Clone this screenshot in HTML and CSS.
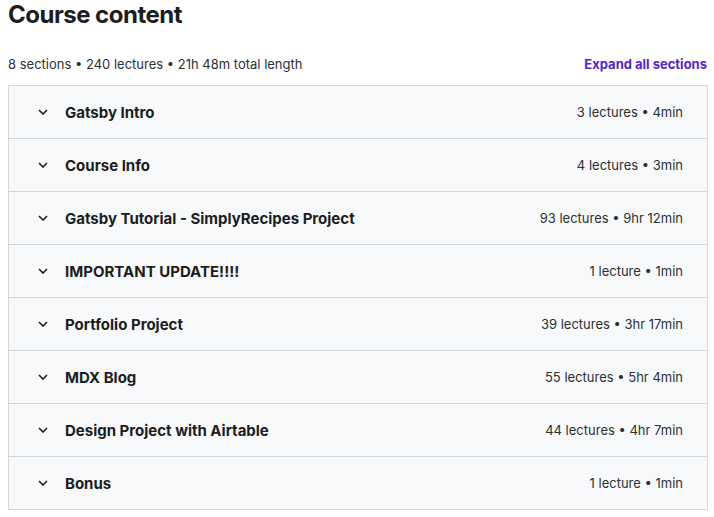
FILE: index.html
```html
<!DOCTYPE html>
<html>
<head>
<meta charset="utf-8">
<link rel="stylesheet" href="styles.css">
</head>
<body>
<div class="page">
  <h2 class="title">Course content</h2>
  <div class="meta">
    <span class="summary">8 sections • 240 lectures • 21h 48m total length</span>
    <button class="expand">Expand all sections</button>
  </div>
  <div class="sections">
    <div class="row"><svg class="chev" viewBox="0 0 10 6"><path d="M1 1l4 4 4-4"/></svg><span class="name">Gatsby Intro</span><span class="info">3 lectures • 4min</span></div>
    <div class="row"><svg class="chev" viewBox="0 0 10 6"><path d="M1 1l4 4 4-4"/></svg><span class="name">Course Info</span><span class="info">4 lectures • 3min</span></div>
    <div class="row"><svg class="chev" viewBox="0 0 10 6"><path d="M1 1l4 4 4-4"/></svg><span class="name">Gatsby Tutorial - SimplyRecipes Project</span><span class="info">93 lectures • 9hr 12min</span></div>
    <div class="row"><svg class="chev" viewBox="0 0 10 6"><path d="M1 1l4 4 4-4"/></svg><span class="name">IMPORTANT UPDATE!!!!</span><span class="info">1 lecture • 1min</span></div>
    <div class="row"><svg class="chev" viewBox="0 0 10 6"><path d="M1 1l4 4 4-4"/></svg><span class="name">Portfolio Project</span><span class="info">39 lectures • 3hr 17min</span></div>
    <div class="row"><svg class="chev" viewBox="0 0 10 6"><path d="M1 1l4 4 4-4"/></svg><span class="name">MDX Blog</span><span class="info">55 lectures • 5hr 4min</span></div>
    <div class="row"><svg class="chev" viewBox="0 0 10 6"><path d="M1 1l4 4 4-4"/></svg><span class="name">Design Project with Airtable</span><span class="info">44 lectures • 4hr 7min</span></div>
    <div class="row"><svg class="chev" viewBox="0 0 10 6"><path d="M1 1l4 4 4-4"/></svg><span class="name">Bonus</span><span class="info">1 lecture • 1min</span></div>
  </div>
</div>
</body>
</html>
```

FILE: styles.css
```css
* { box-sizing: border-box; }
body {
  margin: 0;
  background: #fff;
  font-family: Inter, "Noto Sans", sans-serif;
  color: #1c1d1f;
}
.page {
  padding: 0 6px 0 8px;
}
.title {
  margin: 0;
  padding-top: 1px;
  font-size: 24px;
  line-height: 28px;
  font-weight: 700;
  letter-spacing: -0.5px;
}
.meta {
  display: flex;
  justify-content: space-between;
  align-items: center;
  margin-top: 21px;
  height: 28px;
  margin-bottom: 7px;
}
.summary {
  font-size: 13px;
  color: #2d2f31;
}
.expand {
  border: 0;
  background: none;
  padding: 0;
  margin-right: 1px;
  font-family: inherit;
  font-size: 13px;
  font-weight: 700;
  color: #5624d0;
}
.sections {
  border: 1px solid #d1d7dc;
  border-bottom: 0;
}
.row {
  display: flex;
  align-items: center;
  height: 53px;
  background: #f7f9fa;
  border-bottom: 1px solid #d1d7dc;
  padding: 0 24px 0 29px;
}
.chev {
  width: 10px;
  height: 6px;
  fill: none;
  stroke: #1c1d1f;
  stroke-width: 1.6;
  margin-right: 17px;
}
.name {
  flex: 1;
  font-size: 15px;
  font-weight: 700;
}
.info {
  font-size: 13px;
  color: #2d2f31;
}
```
